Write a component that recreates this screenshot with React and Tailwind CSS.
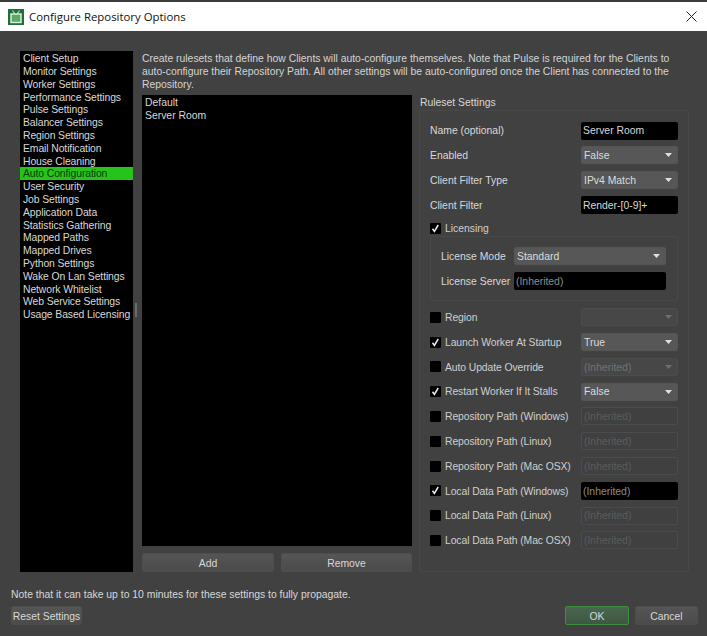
import React from "react";

const FONT = "font-['Liberation_Sans',Arial,sans-serif]";
const nav = ["Client Setup","Monitor Settings","Worker Settings","Performance Settings","Pulse Settings","Balancer Settings","Region Settings","Email Notification","House Cleaning","Auto Configuration","User Security","Job Settings","Application Data","Statistics Gathering","Mapped Paths","Mapped Drives","Python Settings","Wake On Lan Settings","Network Whitelist","Web Service Settings","Usage Based Licensing"];

function Input({ value, disabled, dim, className = "" }) {
  return (
    <div className={`h-[18px] flex items-center px-[2px] pt-[2px] rounded-[2px] text-[10.4px] leading-none whitespace-nowrap ${disabled ? "border border-[#4c4c4c] bg-[#404040] text-[#5c5c5c]" : "bg-black"} ${dim ? "text-[#8c8c8c]" : disabled ? "" : "text-[#d8d8d8]"} ${className}`}>
      {value}
    </div>
  );
}

function Select({ value, disabled, className = "" }) {
  return (
    <div className={`h-[18px] flex items-center justify-between pl-[2px] pr-[5px] rounded-[2px] border text-[10.4px] leading-none ${disabled ? "border-[#4c4c4c] bg-[#474747] text-[#727272]" : "border-[#555] bg-[#575757] text-[#dcdcdc]"} ${className}`}>
      <span className="pt-[2px]">{value}</span>
      <svg width="7" height="4" viewBox="0 0 7 4"><path d="M0 0h7L3.5 4z" fill={disabled ? "#6e6e6e" : "#e0e0e0"} /></svg>
    </div>
  );
}

function Check({ on }) {
  return (
    <div className="w-[11px] h-[11px] bg-black rounded-[1px] flex items-center justify-center shrink-0">
      {on && (
        <svg width="9" height="9" viewBox="0 0 9 9"><path d="M1.5 4.8 3.4 7.4 7.2 1" fill="none" stroke="#eee" strokeWidth="1.5" /></svg>
      )}
    </div>
  );
}

function Row({ label, children }) {
  return (
    <div className="h-[18px] flex items-center justify-between">
      <span className="pt-[2px] text-[10.4px] text-[#d8d8d8] leading-none">{label}</span>
      <div className="w-[97px]">{children}</div>
    </div>
  );
}

function CheckRow({ label, on, children }) {
  return (
    <div className="h-[18px] flex items-center justify-between">
      <div className="flex items-center gap-[4px]">
        <Check on={on} />
        <span className="pt-[2px] text-[10.4px] text-[#cfcfcf] leading-none whitespace-nowrap tracking-[-0.1px]">{label}</span>
      </div>
      <div className="w-[97px]">{children}</div>
    </div>
  );
}

function Button({ children, primary, className = "" }) {
  return (
    <button className={`h-[19px] flex items-center justify-center pt-[3px] whitespace-nowrap rounded-[2px] border text-[10.4px] leading-none text-[#d8d8d8] bg-gradient-to-b ${primary ? "border-[#3c8f3c] from-[#4a664d] to-[#3f5742]" : "border-[#4e4e4e] from-[#555555] to-[#4b4b4b]"} ${className}`}>
      {children}
    </button>
  );
}

export default function App() {
  return (
    <div className={`w-[707px] h-[636px] overflow-hidden flex flex-col bg-[#414141] ${FONT}`}>
      <div className="h-[31px] shrink-0 bg-white border-t-2 border-[#3a3a3a] flex items-center pl-[8px] pr-[10px]">
        <svg width="16" height="16" viewBox="0 0 16 16" className="shrink-0">
          <rect width="16" height="16" fill="#1f6f38" />
          <path d="M4.5 1.5 7 5M11.5 1.5 9 5" stroke="#a9dcae" strokeWidth="1.2" fill="none" />
          <rect x="3" y="5" width="10" height="8.5" fill="#5aa968" stroke="#e0f2e0" strokeWidth="1.4" />
        </svg>
        <span className="ml-[5px] text-[11.4px] text-[#111] leading-none font-['Open_Sans',sans-serif]">Configure Repository Options</span>
        <svg width="11" height="11" viewBox="0 0 11 11" className="ml-auto"><path d="M.5.5l10 10M10.5.5l-10 10" stroke="#222" strokeWidth="1" /></svg>
      </div>

      <div className="flex-1 flex flex-col pl-[11px] pr-[9px] pt-[20px] pb-[11px]">
        <div className="flex pl-[9px] h-[521px]">
          <div className="w-[113px] h-full bg-black shrink-0 pt-[1px]">
            {nav.map((n) => (
              <div key={n} className={`h-[12.8px] pl-[3px] pt-[2px] flex items-center text-[10.4px] tracking-[-0.1px] leading-none whitespace-nowrap ${n === "Auto Configuration" ? "bg-[#26c31b] text-[#0d3a0a]" : "text-[#d8d8d8]"}`}>{n}</div>
            ))}
          </div>
          <div className="w-[9px] shrink-0 flex items-center pl-[2px] pb-[4px]">
            <div className="w-[2px] h-[14px] bg-[#6a6a6a]" />
          </div>
          <div className="w-[547px] flex flex-col">
            <p className="h-[44px] pt-[1px] text-[10.4px] leading-[13px] text-[#d4d4d4]">
              Create rulesets that define how Clients will auto-configure themselves. Note that Pulse is required for the Clients to auto-configure their Repository Path. All other settings will be auto-configured once the Client has connected to the Repository.
            </p>
            <div className="flex-1 flex gap-[7px] min-h-0">
              <div className="w-[270px] flex flex-col shrink-0">
                <div className="flex-1 bg-black pt-[1px] pl-[3px] text-[10.4px] leading-[13px] text-[#d8d8d8]">
                  <div>Default</div>
                  <div>Server Room</div>
                </div>
                <div className="flex justify-between mt-[7px]">
                  <Button className="w-[132px]">Add</Button>
                  <Button className="w-[131px]">Remove</Button>
                </div>
              </div>
              <div className="w-[270px] flex flex-col">
                <div className="h-[15px] pl-[1px] pt-[1px] text-[10.4px] leading-[13px] text-[#d8d8d8]">Ruleset Settings</div>
                <div className="flex-1 border border-[#484848] rounded-[2px] pl-[10px] pr-[10px] pt-[10.5px] flex flex-col gap-[6.8px]">
                  <Row label="Name (optional)"><Input value="Server Room" /></Row>
                  <Row label="Enabled"><Select value="False" /></Row>
                  <Row label="Client Filter Type"><Select value="IPv4 Match" /></Row>
                  <Row label="Client Filter"><Input value="Render-[0-9]+" /></Row>
                  <div className="flex items-center gap-[4px] h-[14px] mt-[1px]">
                    <Check on />
                    <span className="pt-[2px] text-[10.4px] text-[#cfcfcf] leading-none">Licensing</span>
                  </div>
                  <div className="h-[65px] -mt-[6px] border border-[#484848] rounded-[2px] pl-[10px] pr-[11px] pt-[10px] flex flex-col gap-[7px]">
                    <div className="h-[18px] flex items-center justify-between">
                      <span className="pt-[2px] text-[10.4px] text-[#d8d8d8] leading-none">License Mode</span>
                      <Select value="Standard" className="w-[152px]" />
                    </div>
                    <div className="h-[18px] flex items-center justify-between">
                      <span className="pt-[2px] text-[10.4px] text-[#d8d8d8] leading-none whitespace-nowrap">License Server</span>
                      <Input value="(Inherited)" dim className="w-[152px]" />
                    </div>
                  </div>
                  <CheckRow label="Region"><Select value="" disabled /></CheckRow>
                  <CheckRow label="Launch Worker At Startup" on><Select value="True" /></CheckRow>
                  <CheckRow label="Auto Update Override"><Select value="(Inherited)" disabled /></CheckRow>
                  <CheckRow label="Restart Worker If It Stalls" on><Select value="False" /></CheckRow>
                  <CheckRow label="Repository Path (Windows)"><Input value="(Inherited)" disabled /></CheckRow>
                  <CheckRow label="Repository Path (Linux)"><Input value="(Inherited)" disabled /></CheckRow>
                  <CheckRow label="Repository Path (Mac OSX)"><Input value="(Inherited)" disabled /></CheckRow>
                  <CheckRow label="Local Data Path (Windows)" on><Input value="(Inherited)" dim /></CheckRow>
                  <CheckRow label="Local Data Path (Linux)"><Input value="(Inherited)" disabled /></CheckRow>
                  <CheckRow label="Local Data Path (Mac OSX)"><Input value="(Inherited)" disabled /></CheckRow>
                </div>
              </div>
            </div>
          </div>
        </div>
        <div className="mt-[16px] h-[13px] text-[10.4px] leading-[13px] text-[#d8d8d8]">Note that it can take up to 10 minutes for these settings to fully propagate.</div>
        <div className="mt-[5px] flex items-center">
          <Button className="w-[71px]">Reset Settings</Button>
          <Button primary className="w-[64px] ml-auto">OK</Button>
          <Button className="w-[63px] ml-[6px]">Cancel</Button>
        </div>
      </div>
    </div>
  );
}
